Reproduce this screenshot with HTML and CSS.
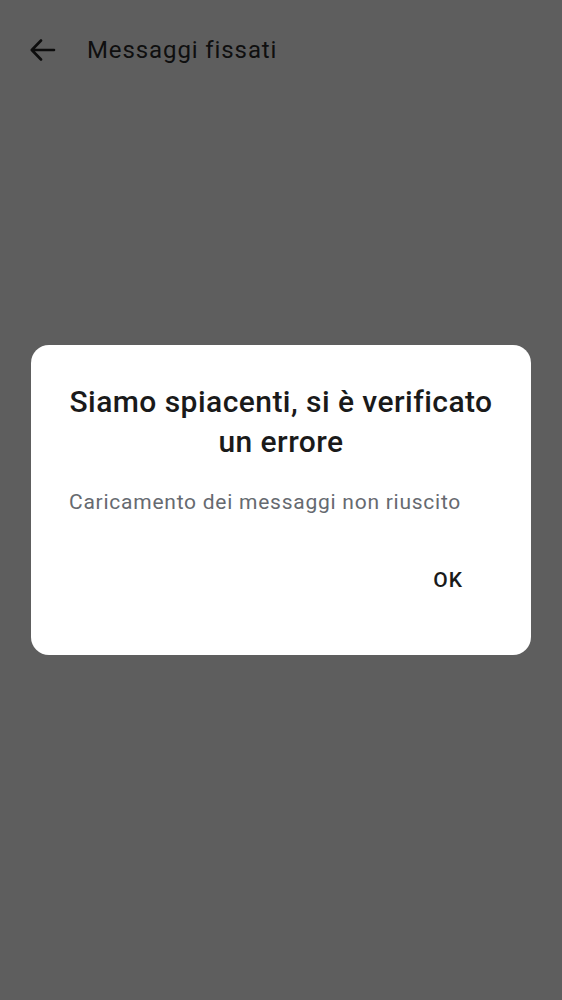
FILE: index.html
```html
<!DOCTYPE html>
<html lang="it">
<head>
<meta charset="utf-8">
<link rel="stylesheet" href="styles.css">
</head>
<body>
<div class="screen">
  <header class="appbar">
    <svg class="back" width="26" height="24" viewBox="0 0 26 24"><path d="M24 12H2M11 2.5L1.8 12 11 21.5" fill="none" stroke="#0d0d0d" stroke-width="2.6" stroke-linecap="round" stroke-linejoin="round"/></svg>
    <span class="title">Messaggi fissati</span>
  </header>
  <div class="overlay">
    <div class="dialog">
      <h1 class="dlg-title">Siamo spiacenti, si è verificato un errore</h1>
      <p class="dlg-body">Caricamento dei messaggi non riuscito</p>
      <div class="actions"><span class="ok">OK</span></div>
    </div>
  </div>
</div>
</body>
</html>
```
FILE: styles.css
```css
html, body { margin: 0; padding: 0; }
body { background: #5e5e5e; font-family: Roboto, "Noto Sans", sans-serif; }
.screen { width: 562px; height: 1000px; display: flex; flex-direction: column; }
.appbar { height: 100px; display: flex; align-items: center; padding-left: 30px; box-sizing: border-box; }
.back { display: block; margin-right: 31px; }
.title { font-size: 24px; color: #0f0f0f; letter-spacing: 0.9px; }
.overlay { flex: 1; display: flex; justify-content: center; padding-top: 245px; }
.dialog { width: 500px; height: 310px; background: #fff; border-radius: 18px; box-sizing: border-box; padding: 37px 30px 0 30px; }
.dlg-title { margin: 0; font-size: 30px; font-weight: 500; text-align: center; color: #1a1a1a; line-height: 40px; letter-spacing: 0.45px; }
.dlg-body { margin: 26px 0 0 8px; font-size: 21px; color: #666a70; line-height: 28px; letter-spacing: 0.75px; }
.actions { display: flex; justify-content: flex-end; margin-top: 52px; padding-right: 38px; }
.ok { font-size: 21px; font-weight: 500; color: #1a1a1a; letter-spacing: 1px; }
```
